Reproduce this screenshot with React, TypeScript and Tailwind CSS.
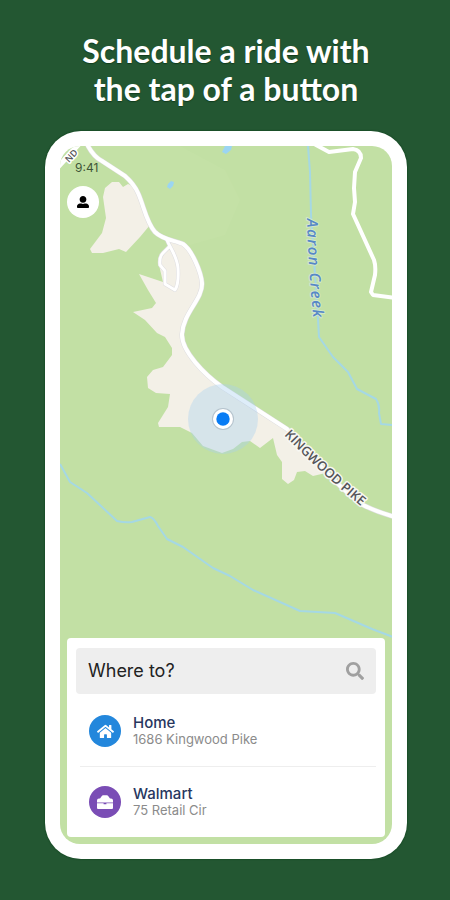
import { FaHome, FaSearch, FaUserAlt } from 'react-icons/fa'

const Briefcase = () => (
    <svg className="w-4 h-4" viewBox="0 0 16 16" fill="none" aria-hidden="true">
        <path
            d="M3 4.4L5 1.8Q5.4 1.2 6 1.2H10Q10.6 1.2 11 1.8L13 4.4H14Q16 4.6 16 6.4V8.6H0V6.4Q0 4.6 2 4.4Z"
            fill="#ffffff"
        />
        <path d="M0 9.3H6.6V10.3H9.4V9.3H16V14Q16 15 15 15H1Q0 15 0 14Z" fill="#ffffff" />
    </svg>
)

const places = [
    {
        name: 'Home',
        address: '1686 Kingwood Pike',
        icon: <FaHome className="w-[17px] h-[17px]" />,
        color: 'bg-[#2387dc]',
    },
    {
        name: 'Walmart',
        address: '75 Retail Cir',
        icon: <Briefcase />,
        color: 'bg-[#7a4db5]',
    },
]

const Map = () => (
    <svg
        className="absolute inset-0 w-full h-full"
        viewBox="60 146 332 698"
        preserveAspectRatio="xMidYMid slice"
        aria-hidden="true"
    >
        <rect x="-400" y="-400" width="1600" height="1800" fill="#c2e0a4" />
        <path d="M88 146L180 146L225 170L240 200L225 235L190 245L155 230L137 192L102 161Z" fill="#c4e1a6" />

        {/* clearings */}
        <g fill="#f3f0e7">
            <path d="M103 197L105 188L112 182L119 182L123 187L128 184L135 187L150 225L140 237L126 252L119 249L103 253L92 253L90 249L102 233L106 218Z" />
            <path d="M168 240L184 244L192 257L202 280L202 292L183 322L181 338L185 348L200 368L220 385L257 409L287 429L330 472L313 476L305 471L297 472L294 480L288 484L282 479L282 462L277 455L273 438L260 448L250 441L242 442L233 449L222 453L203 446L192 433L180 427L159 427L158 423L168 407L170 394L156 393L148 388L147 377L153 370L163 367L172 355L172 348L165 337L157 333L145 320L133 312L152 308L156 303L148 290L139 274L163 282L159 265L163 252L170 247Z" />
        </g>

        {/* water */}
        <g fill="none" stroke="#a5d8e4" strokeWidth="2" strokeLinejoin="round">
            <path d="M308 146L310 172L311 215L318 319L319 337L333 357L348 372L357 389L376 399Q380 405 379 413L381 424L393 425" />
            <path d="M60 464L70 482L87 493L117 521Q125 523 132 522L150 517Q154 518 158 526L167 539L183 547L213 568L230 576L253 590L300 611L335 613L372 629L393 637" />
        </g>
        <g fill="#9bd5f2">
            <path d="M168 184L171 181L174 182L173 186L170 189L167 187Z" />
            <path d="M222 152L225 146L232 146L231 150L226 154Z" />
        </g>

        {/* roads */}
        <g fill="none" strokeLinecap="round" strokeLinejoin="round">
            <g stroke="#dedde0">
                <path
                    d="M167 240C170 248 177 256 178 268Q179 284 175 290L165 284L165 271L160 265Q159 257 163 253L169 247"
                    strokeWidth="4"
                />
                <path
                    d="M88 146Q94 157 102 161L125 176Q134 184 138 193C144 206 146 222 155 232C163 240 174 240 183 244C192 250 201 272 202 283C203 299 183 313 182 334C181 351 205 375 222 387L287 429Q340 490 363 505Q377 512 395 517"
                    strokeWidth="5"
                />
            </g>
            <g stroke="#ffffff">
                <path
                    d="M167 240C170 248 177 256 178 268Q179 284 175 290L165 284L165 271L160 265Q159 257 163 253L169 247"
                    strokeWidth="3"
                />
                <path
                    d="M88 146Q94 157 102 161L125 176Q134 184 138 193C144 206 146 222 155 232C163 240 174 240 183 244C192 250 201 272 202 283C203 299 183 313 182 334C181 351 205 375 222 387L287 429Q340 490 363 505Q377 512 395 517"
                    strokeWidth="4"
                />
                <path
                    d="M316 145L329 152L353 149Q361 150 361 158L355 172L354 188L355 202L353 214L374 260Q376 266 375 275L371 292L373 295L395 298"
                    strokeWidth="4"
                />
                <path d="M58 167L79 144" strokeWidth="5" />
            </g>
        </g>

        {/* current location */}
        <circle cx="223" cy="419" r="35" fill="#a8d0f0" fillOpacity="0.38" />
        <circle cx="223" cy="419" r="11" fill="#b5c3cd" />
        <circle cx="223" cy="419" r="10" fill="#ffffff" />
        <circle cx="223" cy="419" r="6.7" fill="#087cf4" />

        <defs>
            <path id="pike" d="M284 435Q324 477 378 520" />
            <path id="creek" d="M307 219Q308 270 315 335" />
            <path id="corner" d="M69 163L87 144" />
        </defs>
        <g strokeLinejoin="round" paintOrder="stroke" fontFamily="Open Sans, sans-serif" fontWeight="600">
            <text fontSize="13" fill="#555559" stroke="#f7f7f2" strokeWidth="3">
                <textPath href="#pike">KINGWOOD PIKE</textPath>
            </text>
            <text
                className="tracking-widest"
                fontSize="15"
                fill="#5688c7"
                stroke="#d3e7cb"
                strokeWidth="2"
                fontStyle="italic"
            >
                <textPath href="#creek">Aaron Creek</textPath>
            </text>
            <text fontSize="9" fill="#555559" stroke="#ffffff" strokeWidth="3">
                <textPath href="#corner">ND</textPath>
            </text>
        </g>
    </svg>
)

export default function App() {
    return (
        <div className="flex flex-col items-center pr-[43px] pl-[45px] min-h-screen bg-[#235732] font-['Inter',sans-serif]">
            <h1 className="pt-8 text-center text-white font-bold font-['Lato',sans-serif] text-[32px] leading-[38px] whitespace-nowrap [text-shadow:0_1px_1px_#123d1d]">
                Schedule a ride with
                <br />
                the tap of a button
            </h1>
            <main className="flex flex-col flex-1 mt-[23px] mb-[41px] w-full max-w-[420px] rounded-[36px] bg-white p-[15px] shadow-[0_0_2px_#063b14]">
                <div className="flex overflow-hidden relative flex-col flex-1 justify-between rounded-[20px]">
                    <Map />
                    <header className="relative px-[7px] pt-3">
                        <div className="pl-2 text-xs leading-5 text-[#3f5538]">
                            9:41
                        </div>
                        <button
                            aria-label="Profile"
                            className="flex justify-center items-center mt-2 w-8 h-8 text-black bg-white rounded-full"
                        >
                            <FaUserAlt className="w-3 h-3" />
                        </button>
                    </header>
                    <section className="relative px-[9px] pt-2.5 m-[7px] bg-white rounded">
                        <label className="flex items-center px-3 h-[46px] bg-[#eeeeee] rounded">
                            <input
                                type="text"
                                aria-label="Where to?"
                                placeholder="Where to?"
                                className="flex-1 min-w-0 text-lg bg-transparent outline-none placeholder:text-[#222222]"
                            />
                            <FaSearch className="w-[18px] h-[18px] text-[#a0a0a0]" />
                        </label>
                        <ul className="pt-0.5 pl-1 divide-y divide-[#eeeeee]">
                            {places.map((place) => (
                                <li key={place.name}>
                                    <button className="flex gap-3 items-center px-[9px] w-full h-[70px] text-left">
                                        <span
                                            className={`flex justify-center items-center w-8 h-8 text-white rounded-full ${place.color}`}
                                        >
                                            {place.icon}
                                        </span>
                                        <span className="flex flex-col">
                                            <span className="text-[15px] leading-4 font-medium text-[#27375f]">
                                                {place.name}
                                            </span>
                                            <span className="text-[13px] leading-4 text-[#8b8b8b]">
                                                {place.address}
                                            </span>
                                        </span>
                                    </button>
                                </li>
                            ))}
                        </ul>
                    </section>
                </div>
            </main>
        </div>
    )
}
